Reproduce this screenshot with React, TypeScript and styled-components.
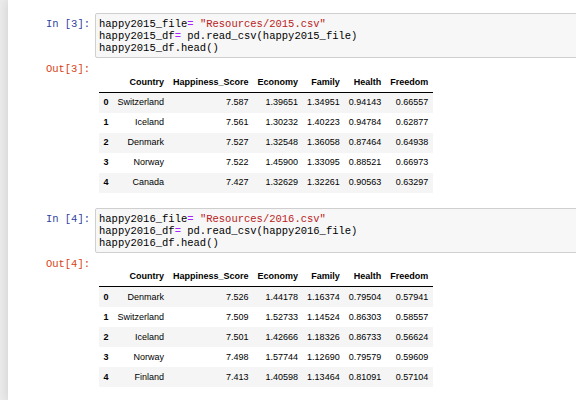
import React from "react";
import styled, { createGlobalStyle } from "styled-components";

const GlobalStyle = createGlobalStyle`
  html, body {
    margin: 0;
    padding: 0;
    background: #eeeeee;
    overflow: hidden;
  }
`;

const Page = styled.div`
  width: 576px;
  height: 400px;
  padding-left: 8px;
  box-sizing: border-box;
  overflow: hidden;
`;

const Notebook = styled.div`
  width: 700px;
  min-height: 400px;
  background: #ffffff;
  box-shadow: 0 0 12px 1px rgba(87, 87, 87, 0.2);
  padding-top: 13px;
  box-sizing: border-box;
`;

const Cell = styled.div`
  display: flex;
  flex-direction: column;
  padding-bottom: 15px;
`;

const Row = styled.div`
  display: flex;
  align-items: flex-start;
`;

const Prompt = styled.div<{ $kind: "in" | "out" }>`
  width: 87px;
  flex: none;
  box-sizing: border-box;
  padding: 5px 5px 0 0;
  text-align: right;
  font: 10.5px/12px "Liberation Mono", monospace;
  color: ${(p) => (p.$kind === "in" ? "#303f9f" : "#d84315")};
  white-space: pre;
`;

const CodeBox = styled.div`
  flex: 1;
  background: #f7f7f7;
  border: 1px solid #cfcfcf;
  border-radius: 2px;
  padding: 4px 3px 3px;
  font: 10.5px/12px "Liberation Mono", monospace;
  color: #000000;
`;

const CodeLine = styled.div`
  white-space: pre;
`;

const Op = styled.span`
  color: #aa22ff;
`;

const Str = styled.span`
  color: #ba2121;
`;

const OutputArea = styled.div`
  padding: 14px 0 0 4px;
`;

const Table = styled.table`
  border-collapse: collapse;
  border: none;
  font: 9px/11px "Liberation Sans", Arial, sans-serif;
  color: #000000;

  th,
  td {
    padding: 4.5px;
    text-align: right;
    white-space: nowrap;
  }
  thead th {
    font-weight: bold;
    padding-bottom: 4px;
    border-bottom: 1px solid #000000;
  }
  tbody th {
    font-weight: bold;
  }
  tbody tr:nth-child(odd) {
    background: #f5f5f5;
  }
`;

type Entry = [string, string, string, string, string, string];

const columns = ["Country", "Happiness_Score", "Economy", "Family", "Health", "Freedom"];

const data2015: Entry[] = [
  ["Switzerland", "7.587", "1.39651", "1.34951", "0.94143", "0.66557"],
  ["Iceland", "7.561", "1.30232", "1.40223", "0.94784", "0.62877"],
  ["Denmark", "7.527", "1.32548", "1.36058", "0.87464", "0.64938"],
  ["Norway", "7.522", "1.45900", "1.33095", "0.88521", "0.66973"],
  ["Canada", "7.427", "1.32629", "1.32261", "0.90563", "0.63297"],
];

const data2016: Entry[] = [
  ["Denmark", "7.526", "1.44178", "1.16374", "0.79504", "0.57941"],
  ["Switzerland", "7.509", "1.52733", "1.14524", "0.86303", "0.58557"],
  ["Iceland", "7.501", "1.42666", "1.18326", "0.86733", "0.56624"],
  ["Norway", "7.498", "1.57744", "1.12690", "0.79579", "0.59609"],
  ["Finland", "7.413", "1.40598", "1.13464", "0.81091", "0.57104"],
];

const DataFrame = ({ rows }: { rows: Entry[] }) => (
  <Table>
    <thead>
      <tr>
        <th />
        {columns.map((c) => (
          <th key={c}>{c}</th>
        ))}
      </tr>
    </thead>
    <tbody>
      {rows.map((r, i) => (
        <tr key={i}>
          <th>{i}</th>
          {r.map((v, j) => (
            <td key={j}>{v}</td>
          ))}
        </tr>
      ))}
    </tbody>
  </Table>
);

const HappyCell = ({ n, year, rows }: { n: number; year: string; rows: Entry[] }) => (
  <Cell>
    <Row>
      <Prompt $kind="in">{`In [${n}]:`}</Prompt>
      <CodeBox>
        <CodeLine>
          happy{year}_file<Op>=</Op> <Str>"Resources/{year}.csv"</Str>
        </CodeLine>
        <CodeLine>
          happy{year}_df<Op>=</Op> pd.read_csv(happy{year}_file)
        </CodeLine>
        <CodeLine>happy{year}_df.head()</CodeLine>
      </CodeBox>
    </Row>
    <Row>
      <Prompt $kind="out">{`Out[${n}]:`}</Prompt>
      <OutputArea>
        <DataFrame rows={rows} />
      </OutputArea>
    </Row>
  </Cell>
);

export default function App() {
  return (
    <>
      <GlobalStyle />
      <Page>
        <Notebook>
          <HappyCell n={3} year="2015" rows={data2015} />
          <HappyCell n={4} year="2016" rows={data2016} />
        </Notebook>
      </Page>
    </>
  );
}
